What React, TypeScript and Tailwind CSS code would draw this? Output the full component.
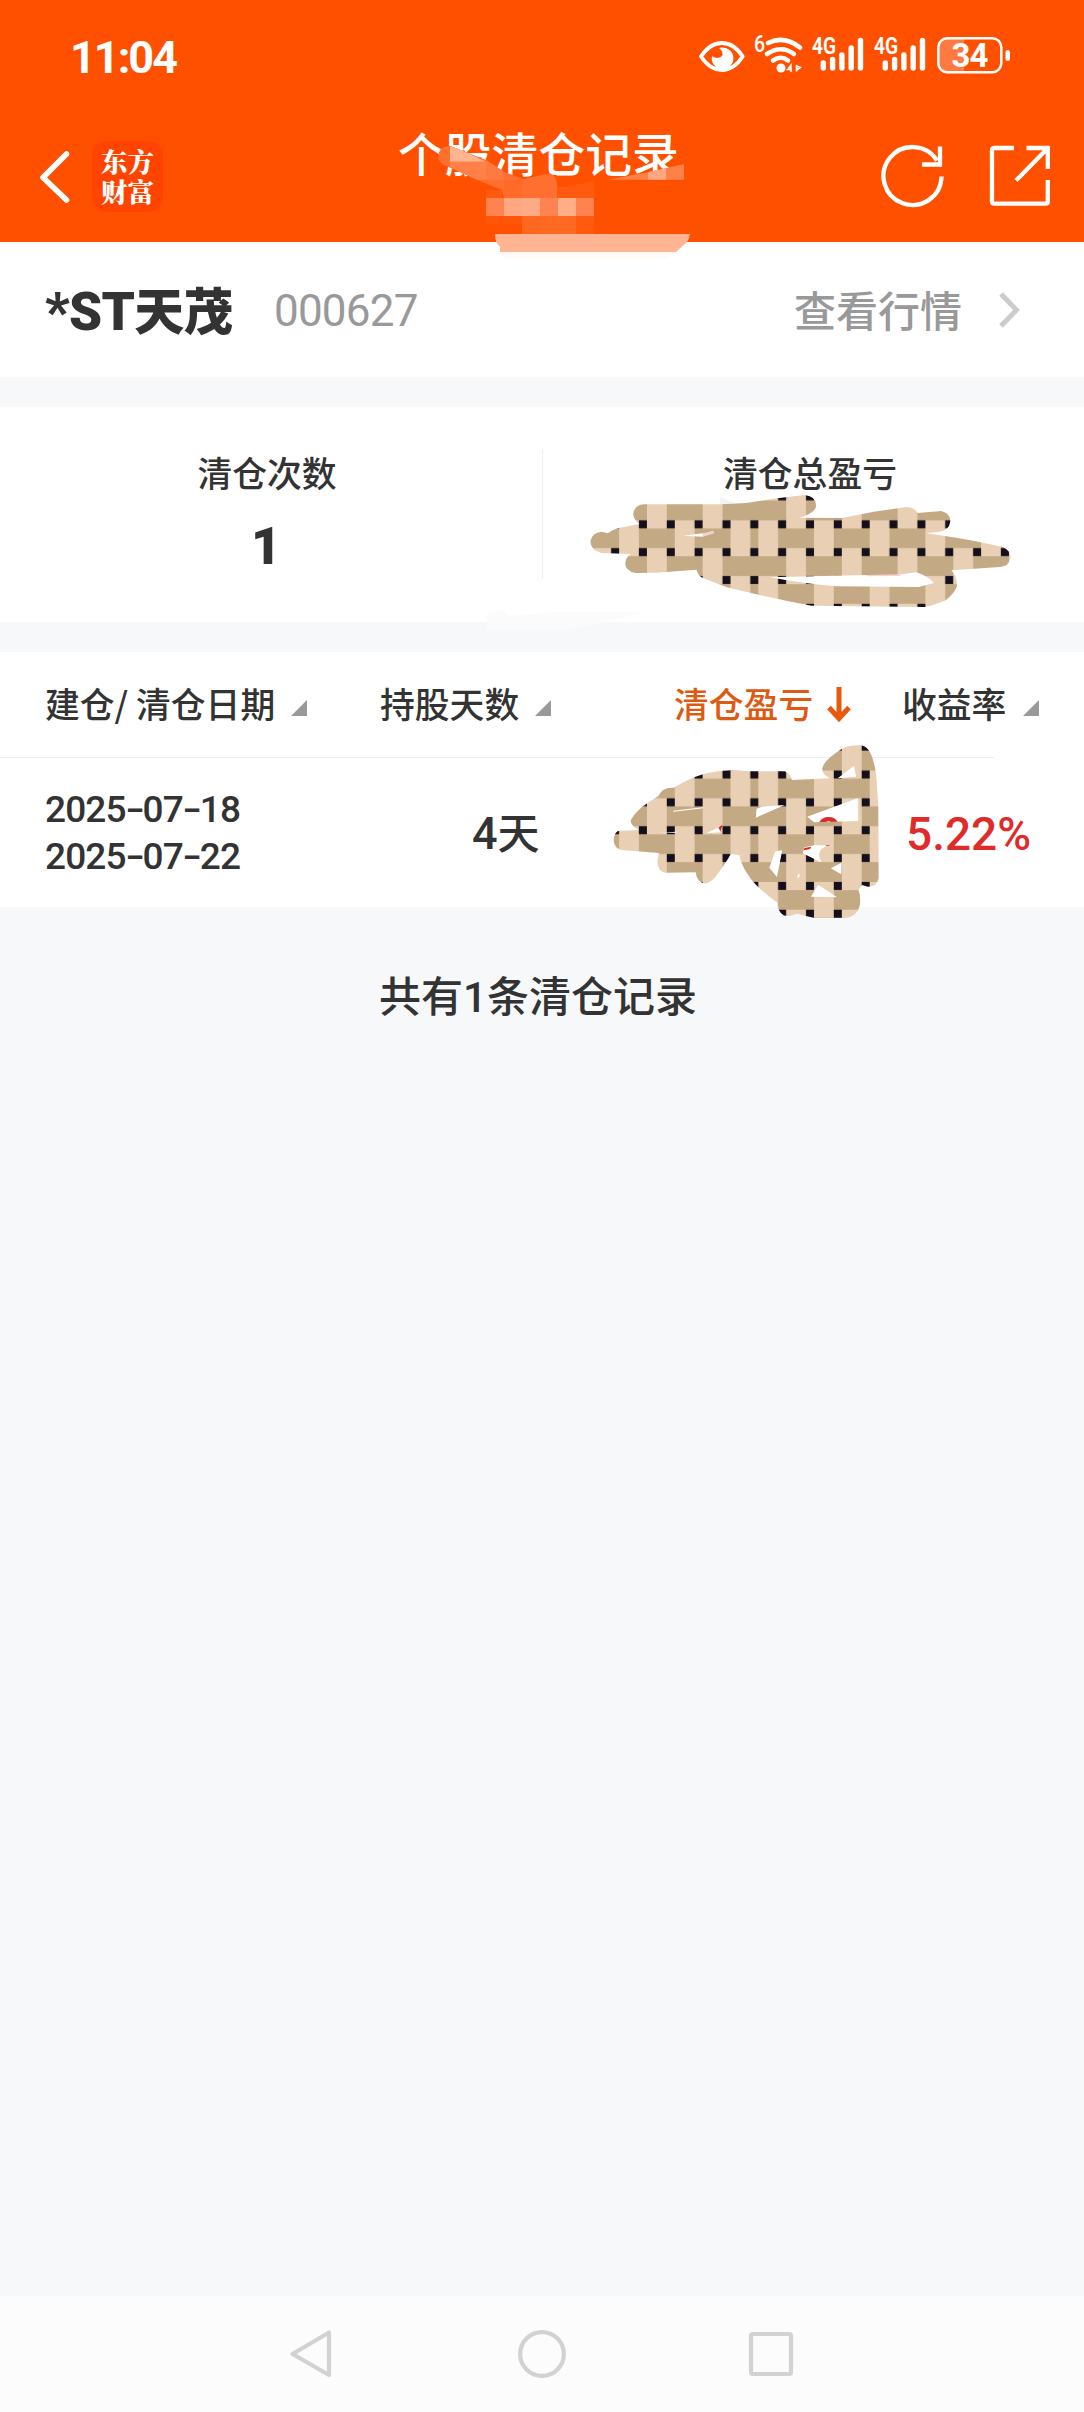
import React from "react";

const LIGHT = "#e9d0b5";
const TAN = "#c4a985";
const INK = "#140f1b";

function Weave({ id, x, y }: { id: string; x: number; y: number }) {
  return (
    <pattern id={id} x={x} y={y} width="55.7" height="55.7" patternUnits="userSpaceOnUse">
      <rect width="55.7" height="55.7" fill={TAN} />
      <rect x="0" y="0" width="19.8" height="28" fill={LIGHT} />
      <rect x="0" y="47.6" width="19.8" height="8.1" fill={LIGHT} />
      <rect x="27.8" y="19.8" width="19.8" height="35.9" fill={LIGHT} />
      <rect x="19.8" y="19.8" width="8" height="8" fill={INK} />
      <rect x="47.6" y="19.8" width="8" height="8" fill={INK} />
      <rect x="19.8" y="47.6" width="8" height="8" fill={INK} />
      <rect x="47.6" y="47.6" width="8" height="8" fill={INK} />
    </pattern>
  );
}

function TotalScribble() {
  return (
    <svg className="absolute left-[580px] top-[83px] h-[130px] w-[440px]" viewBox="580 490 440 130">
      <defs>
        <Weave id="w1" x={647} y={500.5} />
        <Weave id="w2" x={674.8} y={500.5} />
        <clipPath id="c1">
          <path
            transform="translate(542 250) scale(.34566 .33333)"
            clipRule="evenodd"
            d="M264 793Q266 765 295 763L520 763L590 759L680 745L760 735Q795 740 793 768Q790 790 745 803L868 804L960 785L1055 771Q1078 772 1087 789L1155 783Q1183 790 1181 815Q1178 840 1150 845L1112 850Q1240 868 1335 892Q1358 905 1355 925Q1350 950 1325 951L1185 961Q1203 985 1200 1010Q1190 1035 1165 1052Q1135 1065 1108 1071L780 1067L720 1055L620 1033L535 1012L465 984Q450 975 447 959L330 968L270 969Q240 962 241 938Q243 922 256 912L172 909Q140 900 140 873Q145 848 172 845L190 850Q205 838 222 834L282 822Q266 812 264 793ZM660 982L1040 973L1083 967Q1120 980 1134 999L1090 1011L850 1009Q750 1000 660 982ZM408 857L470 849L495 842L498 850L465 860Z"
          />
        </clipPath>
      </defs>
      <g transform="translate(542 250) scale(.34566 .33333)" fill="#fad0cc">
        <path d="M465 849L495 841L499 851L465 861ZM940 974L1036 971L1036 978L940 979Z" />
        <path d="M515 740L556 759L515 764Z" fill="#f3f3f3" />
      </g>
      <g clipPath="url(#c1)">
        <rect x="580" y="490" width="171" height="130" fill="url(#w1)" />
        <rect x="751" y="490" width="269" height="130" fill="url(#w2)" />
      </g>
    </svg>
  );
}

function ProfitScribble() {
  return (
    <svg className="absolute left-[600px] top-[88px] h-[190px] w-[290px]" viewBox="600 740 290 190">
      <defs>
        <Weave id="w3" x={647} y={750.7} />
        <Weave id="w4" x={674.8} y={750.7} />
        <clipPath id="c2">
          <path
            transform="translate(540 640) scale(.34698 .33333)"
            clipRule="evenodd"
            d="M212 600Q215 572 230 572L285 570Q258 555 262 540Q275 515 305 493L342 467Q350 448 370 444L385 443Q430 415 465 404Q500 393 548 390L600 394L705 394Q722 400 726 420L835 415Q810 400 814 383Q820 360 868 328Q890 314 925 316Q945 320 955 345Q968 380 970 420L975 500L976 715Q970 742 945 740L928 735L918 750Q925 770 922 795Q915 830 880 834L790 834L740 821Q715 832 702 826Q685 815 684 788Q620 740 600 705Q580 675 574 645L550 642Q535 670 505 712Q485 735 468 729Q450 720 449 697L362 698Q340 695 338 665L343 639L235 630Q214 625 212 600ZM383 512L470 502L470 505L385 515ZM622 533L624 507L638 500L705 495ZM770 530L917 474L917 543L790 547ZM858 415L905 378L911 410ZM343 578L395 575L390 578ZM480 580L515 562L527 553L519 577ZM661 683L678 634L698 631L683 711ZM757 640L762 622L790 616L838 616Q805 622 804 645L810 667ZM838 685L869 668L868 703ZM741 717L744 700L749 707ZM781 770L802 734L856 772Z"
          />
        </clipPath>
      </defs>
      <g transform="translate(540 640) scale(.34698 .33333)">
        <path
          fill="#fff"
          d="M383 512L470 502L470 505L385 515ZM622 533L624 507L638 500L705 495ZM770 530L917 474L917 543L790 547ZM661 683L678 634L698 631L683 711ZM757 640L790 618L838 616L810 667ZM838 685L869 668L868 703ZM781 770L802 734L856 772Z"
        />
        <path
          fill="#d92b2b"
          d="M804 548Q812 531 832 531Q852 531 859 548L840 548Q832 540 822 548ZM514 562L528 552L521 577ZM762 624L782 620L778 627L760 631ZM824 614L839 614L839 618L824 618ZM772 534L776 536L784 547L780 545Z"
        />
      </g>
      <g clipPath="url(#c2)">
        <rect x="600" y="740" width="151" height="190" fill="url(#w3)" />
        <rect x="751" y="740" width="139" height="190" fill="url(#w4)" />
      </g>
    </svg>
  );
}

function TitleMosaic() {
  const cells: [number, number, number, number, string][] = [
    [318, 264, 54, 54, "#ff8350"],
    [372, 264, 54, 54, "#ffa780"],
    [426, 264, 54, 54, "#ffaa85"],
    [480, 264, 54, 54, "#ff8350"],
    [534, 264, 54, 54, "#ffae88"],
    [588, 264, 54, 54, "#ff8350"],
    [318, 318, 108, 24, "#ff5508"],
    [426, 318, 54, 54, "#ff661e"],
    [480, 318, 108, 54, "#ff6a22"],
    [588, 318, 54, 54, "#ff5a0e"],
    [588, 222, 54, 42, "#ff5a0e"],
  ];
  return (
    <svg className="absolute left-[430px] top-[140px] h-[125px] w-[270px]" viewBox="150 90 810 375">
      <path d="M318 240H366L366 264H318Z" fill="#ff5a0e" />
      <path d="M174 140Q178 105 212 108L318 150L372 185L430 207L510 190Q532 198 532 232L532 264L372 264L366 240L290 209L200 168Q176 160 174 140Z" fill="#ff6f30" />
      <path d="M210 108L262 128L318 155L210 155Z" fill="#ffb590" />
      <path d="M210 155L318 155L318 209L290 209L210 172Z" fill="#ff8148" />
      <path d="M318 150L372 185L372 209L318 209Z" fill="#ff7a40" />
      <path d="M372 209L426 209L426 264L372 264Z" fill="#ff6a28" />
      <path d="M532 232L588 226L640 212L640 264L532 264Z" fill="#ff5a10" />
      <path d="M682 209L804 187L912 162L912 209Z" fill="#ff8148" />
      <path d="M804 187L858 174L858 209L804 209Z" fill="#ffa780" />
      {cells.map(([x, y, w, h, c]) => (
        <rect key={`${x}-${y}`} x={x} y={y} width={w} height={h} fill={c} />
      ))}
      <path d="M360 426H888L865 445H390Q365 445 360 426Z" fill="#fffaf5" />
      <path d="M345 372H930Q926 396 912 404L888 426H360V410Q344 396 345 372Z" fill="#ffb494" />
    </svg>
  );
}

function StatusBar() {
  return (
    <div className="flex h-[114px] items-start pt-[32px] text-white">
      <div className="ml-[70px] w-[628px] font-[Roboto] text-[45px] font-bold leading-[52px] tracking-[-2px]">11:04</div>
      <svg className="mt-[7px] h-[36px] w-[48px]" viewBox="0 0 48 36" fill="none">
        <path d="M3 17.5Q12 4 23.8 4Q36 4 44.7 17.5Q36 31 23.8 31Q12 31 3 17.5Z" stroke="#fff" strokeWidth="3.8" strokeLinejoin="round" />
        <path d="M23.5 8.6A10.8 10.8 0 1 1 14 17.2Q20 20.5 23.4 17.5Q26.8 13.5 21 8.9Z" fill="#fff" />
      </svg>
      <div className="relative ml-[7px] h-[44px] w-[54px]">
        <span className="absolute left-[1px] top-[1px] origin-left scale-x-[0.85] font-[Roboto] text-[23px] font-medium leading-[24px]">6</span>
        <svg className="absolute left-0 top-0 h-[44px] w-[54px]" viewBox="0 0 54 44" fill="none" stroke="#fff" strokeLinecap="round">
          <path d="M15 11Q31 3 47 15.500" strokeWidth="4.600" />
          <path d="M14 22Q28 12.500 41 22" strokeWidth="4.600" />
          <path d="M20 28.500Q28 23 35 28.500" strokeWidth="4.600" />
          <circle cx="28" cy="36" r="4.500" fill="#fff" stroke="none" />
          <path d="M38 33V39.500M35.500 36.500L38 33V37.500H34.500ZM43.500 33.500V39M44 34L47.500 35.500L44 38Z" strokeWidth="1.500" />
        </svg>
      </div>
      {[0, 1].map((n) => (
        <div key={n} className="relative mt-[4px] h-[40px] w-[62px]">
          <span className="absolute left-[5px] top-0 origin-left scale-x-[0.84] font-[Roboto] text-[23px] font-semibold leading-[22px]">4G</span>
          <svg className="absolute left-[3px] top-0 h-[36px] w-[56px]" viewBox="-6 0 56 36" stroke="#fff" strokeWidth="5.4" strokeLinecap="round">
            <path d="M7.300 27V32M16.600 23.500V32M25.900 19V32M35.200 12V32M44.500 4.500V32" />
          </svg>
        </div>
      ))}
      <div className="relative ml-[6px] mt-[5px] h-[36px] w-[74px]">
        <svg className="absolute inset-0 h-[37px] w-[74px]" viewBox="0 0 74 37" fill="none">
          <path d="M10 1.500H27V35H10Q1.500 35 1.500 27V10Q1.500 1.500 10 1.500Z" fill="#ff7a40" />
          <rect x="1.300" y="1.300" width="63" height="34" rx="9" stroke="#fff" strokeWidth="2.500" />
          <rect x="68.500" y="13" width="4.500" height="11" rx="2.200" fill="#fff" />
        </svg>
        <span className="absolute left-0 top-[1px] w-[65px] text-center font-[Roboto] text-[33px] font-bold leading-[36px] tracking-[-1px]">34</span>
      </div>
    </div>
  );
}

function TitleBar() {
  return (
    <div className="flex h-[128px] items-start text-white">
      <svg className="ml-[36px] mt-[34px] h-[60px] w-[38px]" viewBox="36 148 38 60" fill="none">
        <path d="M66.500 154L43 177.500L66.500 200" stroke="#fff" strokeWidth="5.600" strokeLinecap="round" strokeLinejoin="round" />
      </svg>
      <div className="ml-[18px] mt-[27px] h-[71px] w-[71px] rounded-[15px] bg-[#ff4400] pl-[9px] pt-[5px]">
        <p className="w-[54px] break-all font-['Noto_Serif_CJK_SC','Noto_Sans_CJK_SC',serif] text-[26.500px] font-black leading-[30px]">东方财富</p>
      </div>
      <h1 className="ml-[235px] mt-[13px] w-[285px] whitespace-nowrap text-[46.800px] font-medium leading-[50px]">个股清仓记录</h1>
      <svg className="ml-[196px] mt-[28px] h-[68px] w-[68px]" viewBox="879 142 68 68" fill="none" stroke="#fff" strokeWidth="4.300">
        <path d="M941.500 176.500A29 29 0 1 1 937 160.500" />
        <path d="M940 146.500V164.500H922" />
      </svg>
      <svg className="ml-[40px] mt-[28px] h-[68px] w-[68px]" viewBox="987 142 68 68" fill="none" stroke="#fff" strokeWidth="4.300">
        <path d="M1014 148H994.500Q992 148 992 150.500V201.500Q992 203.700 994.500 203.700H1045.500Q1047.800 203.700 1047.800 201.500V180M1026.500 148H1047.800V169M1047 149L1016 180.500" />
      </svg>
    </div>
  );
}

function SortMark() {
  return (
    <svg className="mt-[6px] h-[16px] w-[16px] shrink-0" viewBox="0 0 16 16">
      <path d="M16 0V16H0Z" fill="#999" />
    </svg>
  );
}

function DateLine({ parts }: { parts: string[] }) {
  return (
    <div className="flex h-[47px] items-center">
      {parts.map((p, i) => (
        <React.Fragment key={i}>
          {i > 0 && <span className="w-[17px] origin-center scale-x-[1.5] text-center">-</span>}
          <span>{p}</span>
        </React.Fragment>
      ))}
    </div>
  );
}

export default function App() {
  return (
    <div className="flex h-[2412px] w-[1084px] flex-col overflow-hidden bg-[#f7f8fa] font-['Noto_Sans_CJK_SC',sans-serif] font-medium text-[#333]">
      <header className="relative z-10 h-[242px] bg-[#ff5000]">
        <StatusBar />
        <TitleBar />
        <TitleMosaic />
      </header>

      <section className="flex h-[135px] items-center bg-white">
        <span className="ml-[45px] w-[189px] whitespace-nowrap text-[50px] font-black leading-[60px] tracking-[-0.7px]">
          <span className="font-[Roboto] text-[53px]">*ST</span>天茂
        </span>
        <span className="ml-[40px] mt-[2px] w-[520px] font-[Roboto] text-[44px] font-normal leading-[60px] tracking-[-0.800px] text-[#999]">000627</span>
        <span className="-mt-[2px] whitespace-nowrap text-[42px] leading-[60px] text-[#999]">查看行情</span>
        <svg className="ml-[36px] h-[36px] w-[24px]" viewBox="0 0 24 36" fill="none">
          <path d="M3 2L18.500 18L3 34" stroke="#ccc" strokeWidth="5" />
        </svg>
      </section>

      <section className="relative z-[1] mt-[30px] flex h-[215px] bg-white">
        <div className="flex w-[542px] flex-col items-center pr-[8px] pt-[41px]">
          <div className="text-[34.800px] leading-[48px]">清仓次数</div>
          <div className="-ml-[2px] mt-[23px] font-[Roboto] text-[52px] font-black leading-[56px]">1</div>
        </div>
        <div className="mt-[43px] h-[129px] w-px bg-[#eee]" />
        <div className="flex w-[541px] flex-col items-center pr-[7px] pt-[41px]">
          <div className="text-[34.800px] leading-[48px]">清仓总盈亏</div>
        </div>
        <svg className="absolute left-[470px] top-[163px] h-[80px] w-[240px]" viewBox="0 0 720 240">
          <path d="M50 135Q52 124 62 124H98Q108 126 112 136Q190 135 250 126H530Q470 142 400 155Q350 170 285 180H50Z" fill="#fbfbfc" />
        </svg>
        <TotalScribble />
      </section>

      <section className="relative mt-[30px] h-[255px] bg-white">
        <div className="flex h-[105px] items-center text-[34.800px] leading-[48px]">
          <span className="-mt-[3px] ml-[45px] w-[246px] whitespace-nowrap">建仓/ 清仓日期</span>
          <SortMark />
          <span className="-mt-[3px] ml-[73px] w-[155px] whitespace-nowrap">持股天数</span>
          <SortMark />
          <span className="-mt-[3px] ml-[123px] w-[153px] whitespace-nowrap text-[#dd5a12]">清仓盈亏</span>
          <svg className="h-[36px] w-[24px]" viewBox="0 0 24 36" fill="none" stroke="#e8590c" strokeWidth="5">
            <path d="M12 0V31M2 20.500L12 31.500L22 20.500" />
          </svg>
          <span className="-mt-[3px] ml-[51px] w-[121px] whitespace-nowrap">收益率</span>
          <SortMark />
        </div>
        <div className="h-px w-[994px] bg-[#eee]" />
        <div className="flex h-[149px] items-start">
          <div className="ml-[45px] w-[427px] pt-[28px] font-[Roboto] text-[37px] tracking-[-0.900px]">
            <DateLine parts={["2025", "07", "18"]} />
            <DateLine parts={["2025", "07", "22"]} />
          </div>
          <div className="w-[434px] whitespace-nowrap pt-[43px] text-[42px] leading-[60px]">
            <span className="font-[Roboto] text-[45px]">4</span>天
          </div>
          <div className="pt-[46px] font-[Roboto] text-[46px] leading-[60px] text-[#e02b2b]">5.22%</div>
        </div>
        <ProfitScribble />
      </section>

      <p className="ml-[379px] mt-[57px] whitespace-nowrap text-[42px] leading-[60px]">
        共有<span className="font-[Roboto]">1</span>条清仓记录
      </p>

      <nav className="mt-auto flex h-[116px] bg-[#fcfcfc]">
        <svg className="ml-[286px] mt-[30px] h-[60px] w-[50px]" viewBox="286 2326 50 60" fill="none" stroke="#d2d2d2" strokeWidth="4.200" strokeLinejoin="round">
          <path d="M329 2332.500V2375L292.500 2354Z" />
        </svg>
        <svg className="ml-[178px] mt-[30px] h-[60px] w-[56px]" viewBox="514 2326 56 60" fill="none" stroke="#d2d2d2" strokeWidth="4.200">
          <circle cx="542" cy="2354" r="21.900" />
        </svg>
        <svg className="ml-[174px] mt-[30px] h-[60px] w-[56px]" viewBox="744 2326 56 60" fill="none" stroke="#d2d2d2" strokeWidth="4.200">
          <rect x="751" y="2334" width="40" height="40" rx="2" />
        </svg>
      </nav>
    </div>
  );
}
